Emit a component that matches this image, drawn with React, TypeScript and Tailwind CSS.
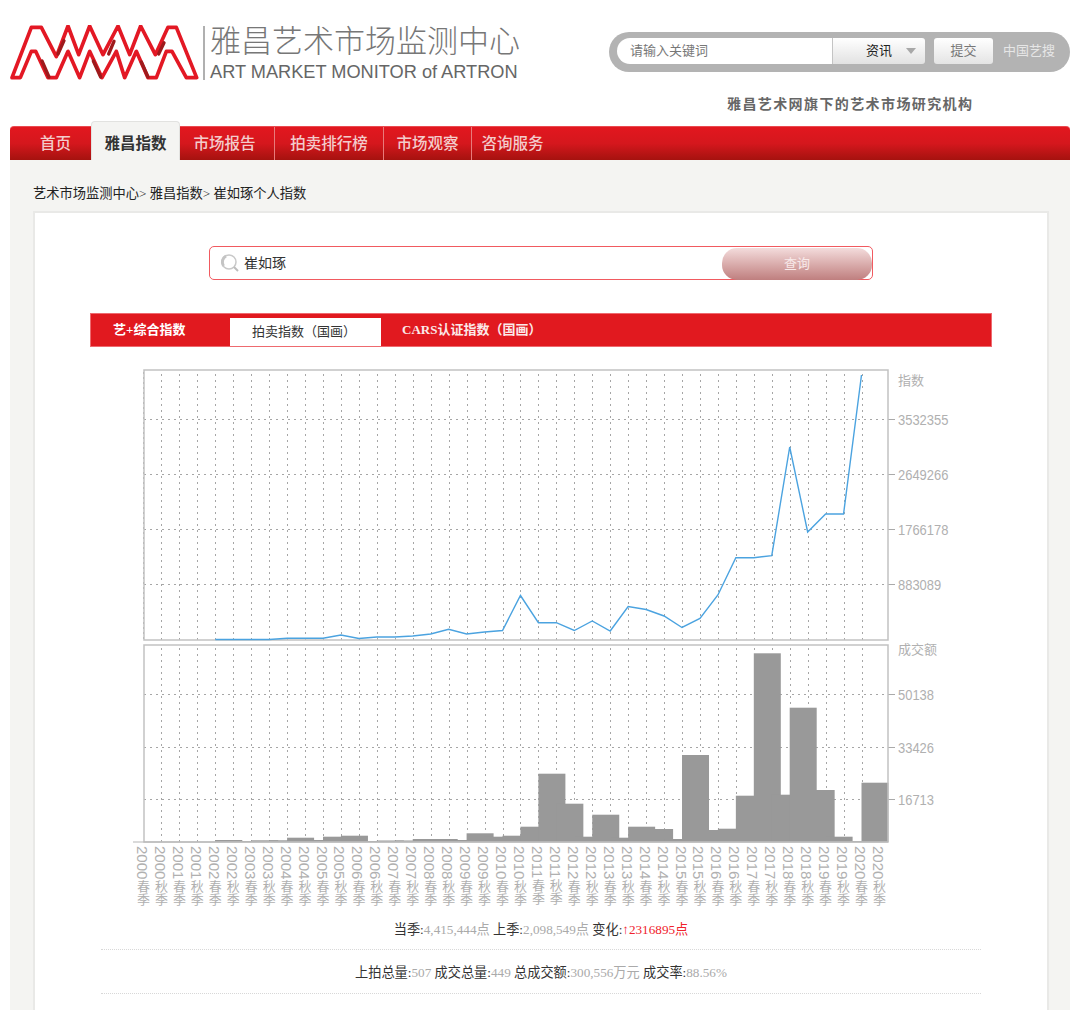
import React from "react";

const linePts: [number, number][] = [
  [4, 639.5], [5, 639.5], [6, 639.5], [7, 639.5], [8, 638.3], [9, 638.3], [10, 638.3], [11, 635], [12, 638.5], [13, 637],
  [14, 637], [15, 636], [16, 634], [17, 629.3], [18, 634], [19, 632], [20, 630.5], [21, 595.5], [22, 622.7], [23, 622.7],
  [24, 630.5], [25, 621], [26, 631], [27, 606.5], [28, 609.5], [29, 616], [30, 627.5], [31, 618.5], [32, 595], [33, 557.7],
  [34, 557.7], [35, 555.7], [36, 447], [37, 532], [38, 514], [39, 514], [40, 375],
];

const barTops: [number, number][] = [
  [4, 840], [5, 841], [6, 840.3], [7, 840.3], [8, 837.7], [9, 840], [10, 836.7], [11, 835.7], [12, 841], [13, 840.5],
  [14, 840.5], [15, 839], [16, 839], [17, 840], [18, 833.3], [19, 836.7], [20, 835.7], [21, 826.7], [22, 773.7], [23, 803.7],
  [24, 836.7], [25, 814.7], [26, 837.7], [27, 826.7], [28, 829], [29, 839], [30, 755], [31, 830], [32, 828.7], [33, 795.7],
  [34, 653.3], [35, 794.7], [36, 707.7], [37, 790], [38, 836.7], [39, 841], [40, 782.7],
];

const X0 = 133;
const Y0 = 365;
const xi = (i: number) => 143.5 + 17.95 * i;
const seasons = Array.from({ length: 42 }, (_, i) => ({
  year: `${2000 + Math.floor(i / 2)}`,
  season: `${i % 2 === 0 ? "春" : "秋"}季`,
}));

function AxisNum({ y, children }: { y: number; children: string }) {
  return (
    <text x={898} y={y + 5} fontSize={15} textLength={children.length * 7.2} lengthAdjust="spacingAndGlyphs">
      {children}
    </text>
  );
}

function Chart() {
  const hTop = [419.5, 474.5, 529.5, 584.5];
  const hBot = [694.5, 747.5, 799.5];
  return (
    <svg width={830} height={545} viewBox={`${X0} ${Y0} 830 545`} className="block">
      {seasons.slice(1, 41).map((_, k) => {
        const x = Math.round(xi(k + 1)) + 0.5;
        return (
          <g key={k} stroke="#a6a6a6" strokeWidth={1} strokeDasharray="2 4">
            <line x1={x} x2={x} y1={374} y2={640} />
            <line x1={x} x2={x} y1={648} y2={842} />
          </g>
        );
      })}
      <line x1={143.5} x2={143.5} y1={372} y2={640} stroke="#a0a0a0" strokeDasharray="2 3" />
      {[...hTop, ...hBot].map((y) => (
        <g key={y}>
          <line x1={144} x2={888} y1={y} y2={y} stroke="#a6a6a6" strokeDasharray="2 4" />
          <line x1={888} x2={895} y1={y} y2={y} stroke="#aaaaaa" />
        </g>
      ))}
      {barTops.map(([i, top]) => (
        <rect key={i} x={xi(i)} y={top} width={27} height={842 - top} fill="#999999" />
      ))}
      <rect x={144} y={370} width={744} height={270} fill="none" stroke="#c2c2c2" strokeWidth={1.5} />
      <rect x={144} y={645} width={744} height={197} fill="none" stroke="#c2c2c2" strokeWidth={1.5} />
      <line x1={133} x2={888} y1={842} y2={842} stroke="#b5b5b5" strokeWidth={1} />
      <polyline
        points={linePts.map(([i, y]) => `${xi(i)},${y}`).join(" ")}
        fill="none"
        stroke="#4ba3e0"
        strokeWidth={1.4}
      />
      <g fill="#b0b0b0" fontSize={13} className="[font-family:'Liberation_Sans','Noto_Sans_CJK_SC',sans-serif]">
        <text x={898} y={385}>指数</text>
        <AxisNum y={419.5}>3532355</AxisNum>
        <AxisNum y={474.5}>2649266</AxisNum>
        <AxisNum y={529.5}>1766178</AxisNum>
        <AxisNum y={584.5}>883089</AxisNum>
        <text x={898} y={654}>成交额</text>
        <AxisNum y={694.5}>50138</AxisNum>
        <AxisNum y={747.5}>33426</AxisNum>
        <AxisNum y={799.5}>16713</AxisNum>
        {seasons.map((s, i) => (
          <text key={i} x={xi(i) - 1} y={846} className="[writing-mode:vertical-rl]" fontSize={13}>
            <tspan fontSize={15}>{s.year}</tspan>
            {s.season}
          </text>
        ))}
      </g>
    </svg>
  );
}

function Logo() {
  return (
    <svg width={190} height={60} viewBox="26 -3 570 180" className="block">
      <path
        d="M32 155 L90 4 L120 4 L165 92 L200 0 L232 86 L265 0 L305 86 L350 0 L385 86 L418 0 L462 86 L500 4 L525 4 L586 155 L555 155 L512 76 L495 76 L465 155 L440 155 L405 76 L370 155 L345 76 L302 155 L265 76 L235 155 L200 76 L165 155 L140 155 L103 76 L90 76 L57 155 Z"
        fill="#ffffff"
        stroke="#e31824"
        strokeWidth={11}
        strokeLinejoin="round"
      />
      <g stroke="#9e1a1c" strokeWidth={10} strokeLinecap="round">
        <line x1={170} y1={84} x2={188} y2={44} />
        <line x1={322} y1={84} x2={338} y2={46} />
        <line x1={472} y1={84} x2={488} y2={50} />
        <line x1={122} y1={105} x2={143} y2={153} />
        <line x1={276} y1={105} x2={298} y2={153} />
        <line x1={420} y1={108} x2={440} y2={153} />
      </g>
    </svg>
  );
}

function Nav() {
  const item = "flex h-full items-center justify-center text-[15.5px] font-medium text-[#f3cccc]";
  const sep = "border-r border-[#e87b7b]";
  return (
    <div className="flex h-[34px] rounded-t-[4px] bg-gradient-to-b from-[#e2171f] via-[#d5171d] to-[#a5120f] border-t border-[#ea4a50]">
      <div className={`${item} w-[81px] pl-[12px] pr-[2px]`}>首页</div>
      <div className="-mt-[6px] flex h-[39px] w-[89px] items-center justify-center rounded-t-[4px] border border-b-0 border-[#e2e2e0] bg-[#f4f4f2] pt-[5px] text-[15.5px] font-bold text-[#333333]">
        雅昌指数
      </div>
      <div className={`${item} ${sep} w-[95px] pr-[5px]`}>市场报告</div>
      <div className={`${item} ${sep} w-[109px]`}>拍卖排行榜</div>
      <div className={`${item} ${sep} w-[88px]`}>市场观察</div>
      <div className={`${item} w-[83px] pr-[2px]`}>咨询服务</div>
    </div>
  );
}

function Magnifier() {
  return (
    <svg width={20} height={20} viewBox="0 0 20 20" className="block">
      <circle cx={9} cy={9} r={7} fill="none" stroke="#c9c9c9" strokeWidth={1.5} />
      <path d="M3.5 13 A7 7 0 0 1 6 3" fill="none" stroke="#c4c4c4" strokeWidth={3} />
      <line x1={14} y1={14} x2={18} y2={18} stroke="#bdbdbd" strokeWidth={2} />
    </svg>
  );
}

export default function App() {
  return (
    <div className="h-[1010px] w-[1080px] overflow-hidden bg-white [font-family:'Liberation_Serif','Noto_Sans_CJK_SC',serif]">
      <header className="h-[126px] px-[10px] [font-family:'Liberation_Sans','Noto_Sans_CJK_SC',sans-serif]">
        <div className="flex h-[84px] items-start">
          <div className="mt-[25px]">
            <Logo />
          </div>
          <div className="mt-[26px] ml-[3px] h-[54px] w-[2px] bg-[#b0b0b0]" />
          <div className="mt-[24px] ml-[5px] w-[320px]">
            <div className="text-[31px] leading-[35px] font-light text-[#777777]">雅昌艺术市场监测中心</div>
            <div className="mt-[3px] text-[18.2px] leading-[20px] text-[#666666]">ART MARKET MONITOR of ARTRON</div>
          </div>
          <div className="mt-[32px] ml-auto flex h-[40px] w-[461px] items-center rounded-[20px] bg-[#b3b3b3] pb-[2px] pl-[8px]">
            <div className="flex h-[26px] w-[215px] items-center rounded-l-[13px] bg-white pl-[13px] text-[13px] text-[#777777]">
              请输入关键词
            </div>
            <div className="flex h-[26px] w-[93px] items-center rounded-r-[3px] border-l border-[#c4c4c4] bg-gradient-to-b from-white to-[#e2e2e2] pl-[33px] text-[13px] text-[#222222]">
              资讯
              <span className="ml-[14px] h-0 w-0 border-x-[5px] border-t-[6px] border-x-transparent border-t-[#a8a8a8]" />
            </div>
            <div className="ml-[9px] flex h-[26px] w-[59px] items-center justify-center rounded-[3px] bg-gradient-to-b from-white to-[#e4e4e4] text-[13px] text-[#777777]">
              提交
            </div>
            <div className="ml-[10px] text-[13px] text-[#e6e6e6]">中国艺搜</div>
          </div>
        </div>
        <div className="pt-[10px] pl-[717px] text-[14px] leading-[21px] font-bold tracking-[1.4px] text-[#666666]">
          雅昌艺术网旗下的艺术市场研究机构
        </div>
      </header>

      <div className="mx-[10px]">
        <Nav />
        <main className="h-[850px] bg-[#f4f4f2] px-[23px]">
          <div className="pt-[24px] text-[13.25px] leading-[19px] text-[#222222]">
            艺术市场监测中心&gt; 雅昌指数&gt; 崔如琢个人指数
          </div>
          <div className="mt-[8px] h-[800px] w-[1016px] border-2 border-b-0 border-[#e9e9e7] bg-white">
            <div className="mt-[33px] ml-[174px] flex h-[34px] w-[664px] items-center rounded-[5px] border border-[#f15a60] pr-0 pl-[10px]">
              <Magnifier />
              <span className="ml-[4px] pb-[2px] text-[14px] text-[#333333] [font-family:'Noto_Sans_CJK_SC',sans-serif]">崔如琢</span>
              <div className="mt-[1px] ml-auto flex h-[32px] w-[150px] items-center justify-center rounded-[15px] bg-gradient-to-b from-[#f3dcdc] to-[#bf7f7f] text-[13px] text-[#f8eaea]">
                查询
              </div>
            </div>

            <div className="mt-[33px] ml-[55px] flex h-[34px] w-[902px] items-end border border-[#ee6a6f] bg-[#e1191f] text-[13px] leading-[20px]">
              <div className="flex h-full w-[139px] items-center pl-[22px] font-bold text-white">艺+综合指数</div>
              <div className="flex h-[28px] w-[151px] items-center bg-white pb-[1px] pl-[22px] text-[#333333]">拍卖指数（国画）</div>
              <div className="flex h-full items-center pl-[21px] font-bold text-[#fbe9e9]">CARS认证指数（国画）</div>
            </div>

            <div className="mt-[18px] ml-[98px]">
              <Chart />
            </div>

            <div className="-mt-[1px] mx-[66px] text-center text-[13.2px] text-[#333333]">
              <div className="h-[41px] border-b border-dotted border-[#d8d8d8] leading-[41px]">
                当季:<span className="text-[#aaaaaa]">4,415,444点</span> 上季:<span className="text-[#aaaaaa]">2,098,549点</span> 变化:<span className="text-[#f0222c]">↑2316895点</span>
              </div>
              <div className="h-[44px] border-b border-dotted border-[#d8d8d8] leading-[46px]">
                上拍总量:<span className="text-[#aaaaaa]">507</span> 成交总量:<span className="text-[#aaaaaa]">449</span> 总成交额:<span className="text-[#aaaaaa]">300,556万元</span> 成交率:<span className="text-[#aaaaaa]">88.56%</span>
              </div>
            </div>
          </div>
        </main>
      </div>
    </div>
  );
}
